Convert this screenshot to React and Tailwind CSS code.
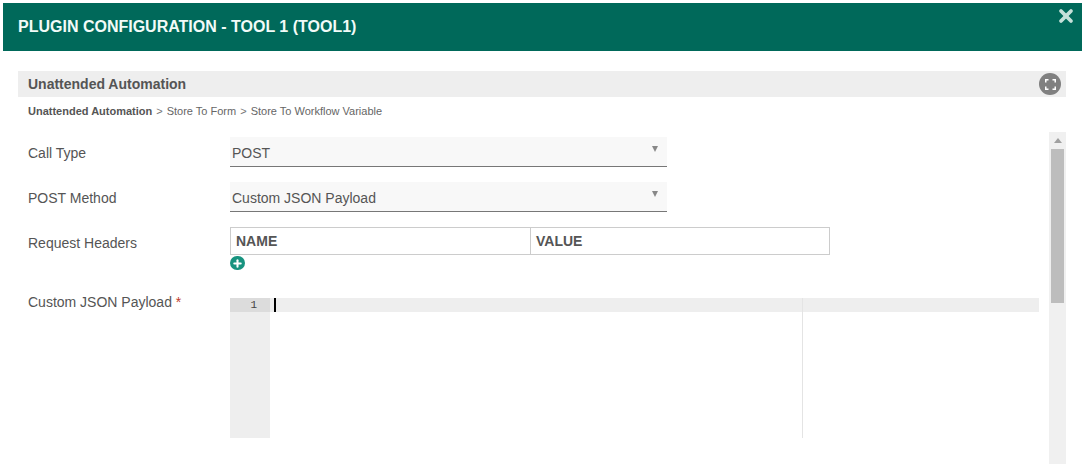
import React from 'react';
import { Plus, X } from 'lucide-react';

function FormRow({ label, required, labelClass, className, children }) {
  return (
    <div className={`flex ${className}`}>
      <div className="w-[212px] shrink-0 pl-[10px] text-[14px] text-[#555]">
        <div className={`leading-[16px] ${labelClass}`}>
          {label}
          {required && <span className="text-[#c0392b]"> *</span>}
        </div>
      </div>
      <div className="flex-1">{children}</div>
    </div>
  );
}

function SelectBox({ value }) {
  return (
    <div className="relative flex h-[30px] w-[437px] items-end border-b border-[#777] bg-[#f8f8f8] pb-[4px] pl-[2px] text-[14px] leading-[18px] text-[#555]">
      {value}
      <span className="absolute right-[9px] top-[9px] h-0 w-0 border-x-[3.5px] border-t-[6px] border-x-transparent border-t-[#888]" />
    </div>
  );
}

function App() {
  return (
    <div className="h-[464px] w-[1085px] overflow-hidden bg-white font-['Liberation_Sans',Arial,sans-serif]">
      <div className="px-[3px] pt-[3px]">
        <div className="relative flex h-[48px] items-center bg-[#00695a] pl-[15px] text-[16px] font-bold text-[#f2fbf8]">
          PLUGIN CONFIGURATION - TOOL 1 (TOOL1)
          <X className="absolute right-[6px] top-[3px] text-[#c5e0d9]" size={20} strokeWidth={4.5} />
        </div>
      </div>

      <div className="pl-[18px] pr-[19px] pt-[20px]">
        <div className="flex h-[26px] items-center justify-between bg-[#eee] pl-[10px] pr-[5px] text-[14px] font-bold text-[#555]">
          Unattended Automation
          <span className="flex h-[22px] w-[22px] items-center justify-center rounded-full bg-[#808080]">
            <svg width="11" height="11" viewBox="0 0 11 11" fill="none" stroke="#fff" strokeWidth="1.5">
              <path d="M.75 3.5V.75H3.5M7.5.75h2.75V3.5M10.25 7.5v2.75H7.5M3.5 10.25H.75V7.5" />
            </svg>
          </span>
        </div>

        <div className="flex h-[35px] pl-[10px] pt-[7px] text-[11px] leading-[14px] text-[#666]">
          <span className="font-bold text-[#555]">Unattended Automation</span>
          <span className="mx-[4px] text-[#777]">&gt;</span>
          <span>Store To Form</span>
          <span className="mx-[4px] text-[#777]">&gt;</span>
          <span>Store To Workflow Variable</span>
        </div>

        <div className="flex h-[332px]">
          <div className="flex-1 pt-[5px]">
            <FormRow label="Call Type" labelClass="mt-[8px]" className="h-[45px]">
              <SelectBox value="POST" />
            </FormRow>
            <FormRow label="POST Method" labelClass="mt-[8px]" className="h-[45px]">
              <SelectBox value="Custom JSON Payload" />
            </FormRow>
            <FormRow label="Request Headers" labelClass="mt-[8px]" className="h-[71px]">
              <div className="flex h-[28px] w-[600px] border border-[#ccc] text-[14px] font-bold leading-[26px] text-[#555]">
                <div className="w-[300px] border-r border-[#ccc] pl-[5px]">NAME</div>
                <div className="flex-1 pl-[5px]">VALUE</div>
              </div>
              <div className="mt-[1px] flex h-[14px] w-[15px] items-center justify-center rounded-full bg-[#17937f]">
                <Plus className="text-white" size={11} strokeWidth={4.5} />
              </div>
            </FormRow>
            <FormRow label="Custom JSON Payload" required labelClass="-mt-[4px]" className="h-[140px]">
              <div className="relative flex h-[140px] w-[809px]">
                <div className="w-[40px] bg-[#eee]">
                  <div className="h-[14px] bg-[#dcdcdc] pr-[13px] text-right font-['Liberation_Mono',monospace] text-[11px] leading-[14px] text-[#444]">1</div>
                </div>
                <div className="flex-1">
                  <div className="h-[14px] bg-[#eee] pl-[4px]">
                    <div className="h-[14px] w-[2px] bg-black" />
                  </div>
                </div>
                <div className="absolute left-[572px] top-0 h-[140px] w-px bg-[#e4e4e4]" />
              </div>
            </FormRow>
          </div>

          <div className="w-[17px] shrink-0 bg-[#f0f0f0]">
            <div className="flex h-[17px] items-center justify-center">
              <span className="h-0 w-0 border-x-[4px] border-b-[5px] border-x-transparent border-b-[#a0a0a0]" />
            </div>
            <div className="ml-[2px] h-[154px] w-[13px] bg-[#bdbdbd]" />
          </div>
        </div>
      </div>
    </div>
  );
}

export default App;
